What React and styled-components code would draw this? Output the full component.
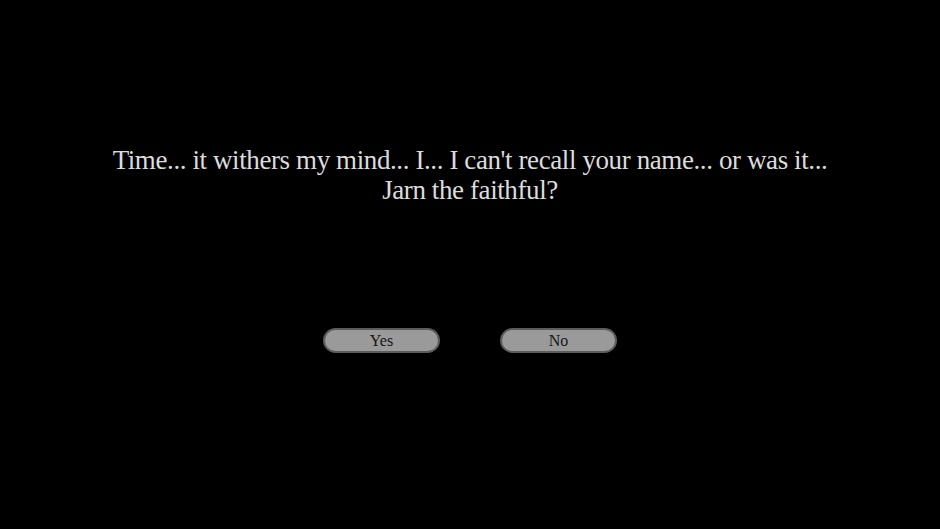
import React from "react";
import styled, { createGlobalStyle } from "styled-components";

const Global = createGlobalStyle`
    html, body {
        margin: 0;
        padding: 0;
        background: #000;
    }
`;

const Screen = styled.div`
    width: 940px;
    height: 529px;
    background: #000;
    display: flex;
    flex-direction: column;
    align-items: center;
    padding-top: 145px;
    box-sizing: border-box;
    font-family: "Liberation Serif", "DejaVu Serif", serif;
`;

const Message = styled.p`
    margin: 0;
    width: 800px;
    text-align: center;
    color: #dcdcdc;
    font-size: 27px;
    line-height: 30px;
    letter-spacing: -0.4px;
`;

const Choices = styled.div`
    display: flex;
    gap: 60px;
    margin-top: 123px;
`;

const Choice = styled.button`
    width: 117px;
    height: 25px;
    border-radius: 13px;
    border: 2px solid #5c5c5c;
    background: #9a9a9a;
    color: #151515;
    font-family: inherit;
    font-size: 16px;
    padding: 0;
    cursor: pointer;
    box-sizing: border-box;
`;

const App = () => {
    return (
        <Screen>
            <Global />
            <Message>
                Time... it withers my mind... I... I can't recall your name... or was it...
                <br />
                Jarn the faithful?
            </Message>
            <Choices>
                <Choice>Yes</Choice>
                <Choice>No</Choice>
            </Choices>
        </Screen>
    );
}

export default App
